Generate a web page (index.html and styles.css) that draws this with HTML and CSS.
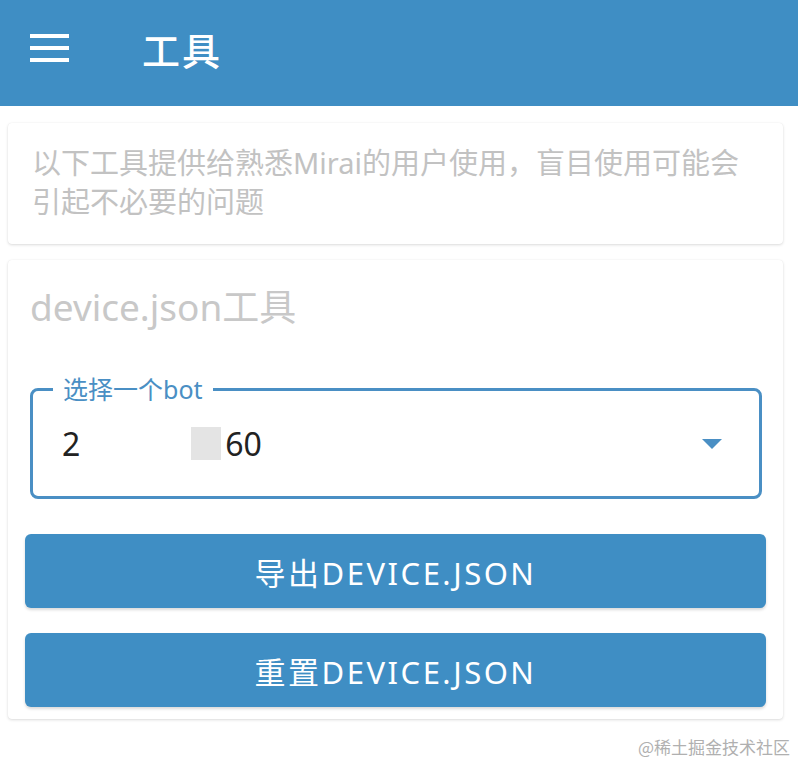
FILE: index.html
```html
<!DOCTYPE html>
<html lang="zh-CN">
<head>
    <meta charset="UTF-8">
    <meta name="viewport" content="width=device-width, initial-scale=1.0">
    <title>工具</title>
    <link rel="stylesheet" href="styles.css">
</head>
<body>
    <header class="app-bar">
        <div class="menu-btn">
            <span></span>
            <span></span>
            <span></span>
        </div>
        <h1>工具</h1>
    </header>

    <main class="content">
        <div class="card notice">
            以下工具提供给熟悉Mirai的用户使用，盲目使用可能会引起不必要的问题
        </div>

        <div class="card tool">
            <h2>device.json工具</h2>

            <div class="select">
                <label>选择一个bot</label>
                <div class="select-value">
                    <span>2</span>
                    <span class="masked"></span>
                    <span class="tail">60</span>
                </div>
                <svg class="arrow" width="20" height="10" viewBox="0 0 20 10">
                    <path d="M0 0 L20 0 L10 10 Z" fill="#4a8fc4"/>
                </svg>
            </div>

            <button class="btn">导出DEVICE.JSON</button>
            <button class="btn">重置DEVICE.JSON</button>
        </div>
    </main>

    <div class="watermark">@稀土掘金技术社区</div>
</body>
</html>
```

FILE: styles.css
```css
body {
    margin: 0;
    padding: 0;
    font-family: "Noto Sans", "Noto Sans CJK SC", sans-serif;
    background: #fff;
    color: #212121;
}

.app-bar {
    height: 106px;
    background: #3f8ec4;
    display: flex;
    align-items: center;
    padding-left: 30px;
    box-sizing: border-box;
}

.menu-btn {
    width: 39px;
    display: flex;
    flex-direction: column;
    gap: 8px;
    margin-top: -10px;
}

.menu-btn span {
    display: block;
    height: 4px;
    background: #fff;
}

.app-bar h1 {
    margin: -10px 0 0 73px;
    color: #fff;
    font-family: "Noto Sans CJK SC", sans-serif;
    font-size: 38px;
    font-weight: 500;
    letter-spacing: 2px;
}

.content {
    padding: 17px 15px 0 8px;
    display: flex;
    flex-direction: column;
    gap: 16px;
}

.card {
    background: #fff;
    border-radius: 4px;
    box-shadow: 0 1px 3px rgba(0, 0, 0, 0.14), 0 0 1px rgba(0, 0, 0, 0.08);
}

.notice {
    padding: 20px 30px 23px 24px;
    font-size: 29px;
    line-height: 39px;
    color: #c2c2c2;
}

.tool {
    padding: 23px 17px 12px;
}

.tool h2 {
    margin: 0 0 0 5px;
    font-size: 37px;
    line-height: 48px;
    font-weight: 400;
    color: #c8c8c8;
}

.select {
    position: relative;
    margin: 57px 4px 35px 5px;
    height: 111px;
    box-sizing: border-box;
    border: 3px solid #4a8fc4;
    border-radius: 8px;
    display: flex;
    align-items: center;
    padding: 0 37px 0 29px;
}

.select label {
    position: absolute;
    top: -17px;
    left: 20px;
    padding: 0 10px;
    background: #fff;
    font-size: 25px;
    line-height: 30px;
    color: #4a8fc4;
}

.select-value {
    flex: 1;
    display: flex;
    align-items: center;
    font-size: 32px;
    line-height: 40px;
    color: #222;
}

.masked {
    display: inline-block;
    width: 30px;
    height: 33px;
    margin-left: 111px;
    background: #e4e4e4;
}

.tail {
    margin-left: 4px;
}

.btn {
    display: block;
    width: 100%;
    height: 74px;
    margin-bottom: 25px;
    border: none;
    border-radius: 6px;
    background: #3f8ec4;
    color: #fff;
    font-family: "Noto Sans", "Noto Sans CJK SC", sans-serif;
    font-size: 31px;
    font-weight: 400;
    letter-spacing: 2.5px;
    box-shadow: 0 2px 3px rgba(0, 0, 0, 0.15);
}

.btn:last-child {
    margin-bottom: 0;
}

.watermark {
    text-align: right;
    padding: 15px 8px 0 0;
    font-size: 17px;
    color: #b0b0b0;
    font-family: "Noto Sans CJK SC", sans-serif;
}
```
